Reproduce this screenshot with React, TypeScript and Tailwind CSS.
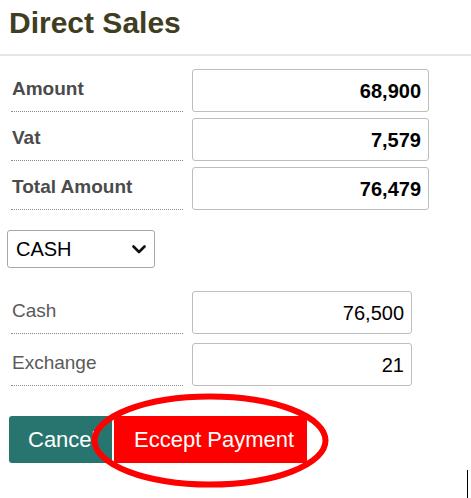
import React from "react";

type Row = { label: string; value: string };

const totals: Row[] = [
  { label: "Amount", value: "68,900" },
  { label: "Vat", value: "7,579" },
  { label: "Total Amount", value: "76,479" },
];

const payment: Row[] = [
  { label: "Cash", value: "76,500" },
  { label: "Exchange", value: "21" },
];

function FieldRow({ row, bold, inputWidth }: { row: Row; bold?: boolean; inputWidth: string }) {
  return (
    <div className="flex h-[43px]">
      <div
        className={`ml-[11px] w-[172px] flex items-center pb-[1px] border-b border-dotted border-[#8a8a8a] text-[19px] ${
          bold ? "font-bold text-[#4b4b4b]" : "text-[#5a5a5a]"
        }`}
      >
        <span className="pl-[1px]">{row.label}</span>
      </div>
      <div
        className={`ml-[9px] ${inputWidth} h-full rounded-[3px] border-[1.5px] border-[#bdbdbd] flex items-center justify-end pr-[7px] text-[20px] text-black ${
          bold ? "font-bold" : ""
        }`}
      >
        {row.value}
      </div>
    </div>
  );
}

export default function App() {
  return (
    <div className="relative w-[471px] h-[498px] bg-white overflow-hidden font-['Liberation_Sans',Arial,sans-serif]">
      <h1 className="h-[56px] pl-[9px] pt-[5px] text-[30px] leading-[36px] font-bold text-[#3f3e22] border-b-2 border-[#e6e6e6]">
        Direct Sales
      </h1>

      {/* Totals */}
      <div className="mt-[13px] flex flex-col gap-[6px]">
        {totals.map((r) => (
          <FieldRow key={r.label} row={r} bold inputWidth="w-[237px]" />
        ))}
      </div>

      {/* Payment type */}
      <div className="ml-[7px] mt-[20px] w-[148px] h-[38px] rounded-[3px] border border-[#a8a8a8] flex items-center justify-between pl-[8px] pr-[8px] text-[20px] text-black">
        <span>CASH</span>
        <svg width="14" height="9" viewBox="0 0 14 9" className="mt-[1px]">
          <path d="M1.5 1.5 L7 7 L12.5 1.5" fill="none" stroke="#111" strokeWidth="2.6" strokeLinecap="round" strokeLinejoin="round" />
        </svg>
      </div>

      <div className="mt-[23px] flex flex-col gap-[9px]">
        {payment.map((r) => (
          <FieldRow key={r.label} row={r} inputWidth="w-[220px]" />
        ))}
      </div>

      {/* Actions */}
      <div className="relative ml-[9px] mt-[30px] flex h-[47px]">
        <button className="w-[103px] h-full rounded-l-[3px] bg-[#28756f] text-white text-[22px] text-left pl-[19px] whitespace-nowrap overflow-hidden">
          Cancel
        </button>
        <div className="w-[2px] bg-white" />
        <button className="w-[193px] h-full bg-[#ff0000] text-white text-[22px] text-left pl-[20px]">
          Eccept Payment
        </button>
        <svg
          className="absolute left-[82px] top-[-23px] pointer-events-none"
          width="238"
          height="95"
          viewBox="0 0 238 95"
        >
          <ellipse cx="119" cy="47.5" rx="115.5" ry="44" fill="none" stroke="#ff0000" strokeWidth="6" />
        </svg>
      </div>

      <div className="absolute left-[467px] top-[470px] w-[1px] h-[28px] bg-black" />
    </div>
  );
}
